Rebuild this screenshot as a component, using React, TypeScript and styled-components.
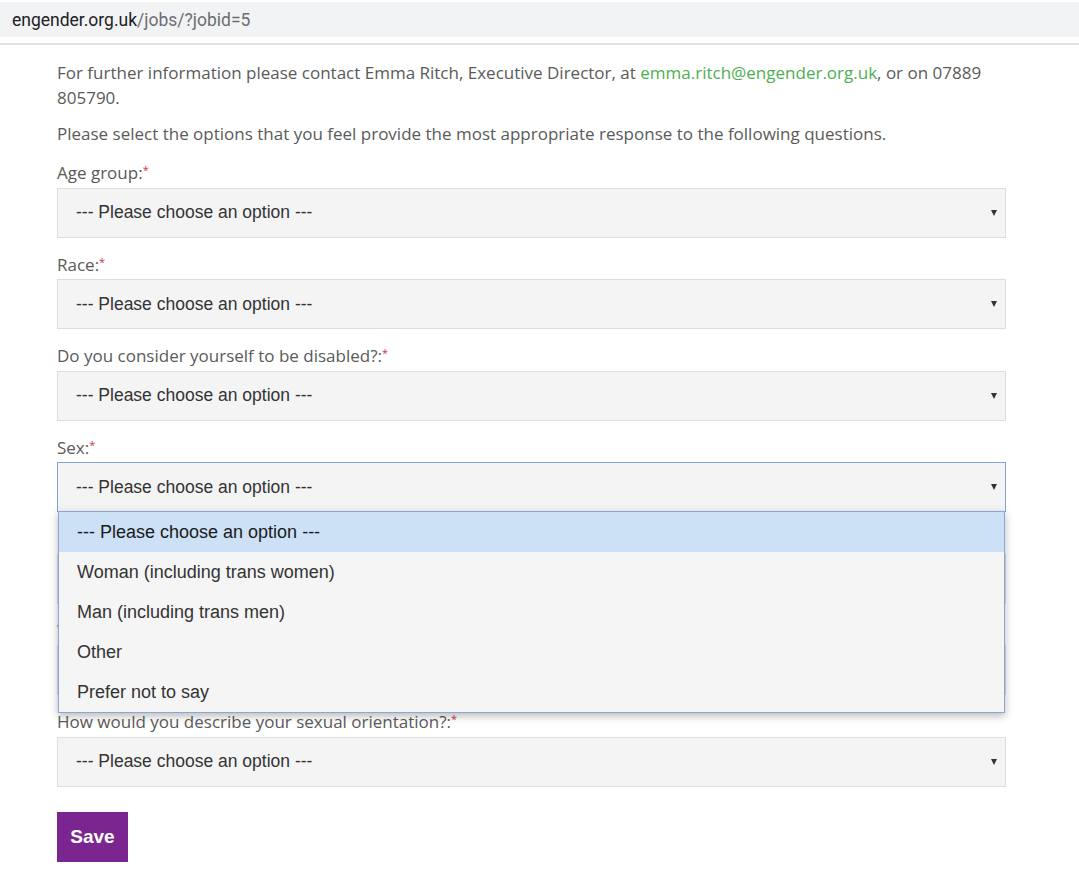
import React from 'react'
import styled, { createGlobalStyle } from 'styled-components'

const GlobalStyle = createGlobalStyle`
  body {
    margin: 0;
    background: #fff;
    font-family: 'Open Sans', 'Liberation Sans', sans-serif;
  }
`

type Field = {
  label: string
  open?: boolean
}

const fields: Field[] = [
  { label: 'Age group:' },
  { label: 'Race:' },
  { label: 'Do you consider yourself to be disabled?:' },
  { label: 'Sex:', open: true },
  { label: 'Is your gender identity the same as the sex you were assigned at birth?:' },
  { label: 'What is your religion or belief?:' },
  { label: 'How would you describe your sexual orientation?:' },
]

const sexOptions = [
  '--- Please choose an option ---',
  'Woman (including trans women)',
  'Man (including trans men)',
  'Other',
  'Prefer not to say',
]

const PLACEHOLDER = '--- Please choose an option ---'

const App = () => {
  return (
    <>
      <GlobalStyle />
      <AddressBar>
        <Host>engender.org.uk</Host>
        <Path>/jobs/?jobid=5</Path>
      </AddressBar>
      <Divider />

      <Content>
        <Text>
          For further information please contact Emma Ritch, Executive Director, at{' '}
          <Link href="#">emma.ritch@engender.org.uk</Link>, or on 07889 805790.
        </Text>
        <Text>
          Please select the options that you feel provide the most appropriate response to the
          following questions.
        </Text>

        <Form>
          {fields.map((field) => (
            <FieldGroup key={field.label}>
              <Label>
                {field.label}
                <Required>*</Required>
              </Label>
              <SelectWrap>
                <SelectBox $focused={field.open}>
                  {PLACEHOLDER}
                  <Caret />
                </SelectBox>
                {field.open && (
                  <Dropdown>
                    {sexOptions.map((option, i) => (
                      <Option key={option} $active={i === 0}>
                        {option}
                      </Option>
                    ))}
                  </Dropdown>
                )}
              </SelectWrap>
            </FieldGroup>
          ))}
          <SaveButton type="button">Save</SaveButton>
        </Form>
      </Content>
    </>
  )
}

export default App

const AddressBar = styled.div`
  margin-top: 2px;
  height: 35px;
  display: flex;
  align-items: center;
  padding-left: 12px;
  background: #f1f3f4;
  font-family: Roboto, 'Liberation Sans', sans-serif;
  font-size: 17.5px;
`

const Host = styled.span`
  color: #202124;
`

const Path = styled.span`
  color: #6b6e72;
`

const Divider = styled.div`
  margin-top: 6px;
  height: 2px;
  background: #e1e3e3;
`

const Content = styled.main`
  width: 949px;
  padding: 15px 0 40px 57px;
`

const Text = styled.p`
  margin: 0 0 11px;
  font-size: 17px;
  line-height: 25px;
  color: #5a5a5a;
`

const Link = styled.a`
  color: #4cb050;
  text-decoration: none;
`

const Form = styled.form`
  display: flex;
  flex-direction: column;
  padding-top: 3px;
`

const FieldGroup = styled.div`
  display: flex;
  flex-direction: column;
  margin-bottom: 14px;
`

const Label = styled.label`
  font-size: 17px;
  line-height: 25px;
  color: #5a5a5a;
  margin-bottom: 2.5px;
`

const Required = styled.sup`
  color: #d0343b;
  font-size: 11px;
  line-height: 0;
  vertical-align: 5px;
`

const SelectWrap = styled.div`
  position: relative;
`

const SelectBox = styled.div<{ $focused?: boolean }>`
  box-sizing: border-box;
  height: 50px;
  display: flex;
  align-items: center;
  justify-content: space-between;
  padding: 0 8px 0 18px;
  background: #f4f4f4;
  border: 1px solid ${({ $focused }) => ($focused ? '#7fa3dc' : '#dedede')};
  font-family: 'Liberation Sans', Arial, sans-serif;
  font-size: 17.5px;
  color: #333;
`

const Caret = styled.span`
  width: 0;
  height: 0;
  border-left: 3.5px solid transparent;
  border-right: 3.5px solid transparent;
  border-top: 6px solid #333;
`

const Dropdown = styled.ul`
  position: absolute;
  top: 100%;
  left: 1px;
  right: 1px;
  margin: -1px 0 0;
  padding: 0;
  list-style: none;
  background: #f5f5f5;
  border: 1px solid #8aa6d6;
  box-shadow: 0 3px 8px rgba(0, 0, 0, 0.28);
  z-index: 10;
`

const Option = styled.li<{ $active?: boolean }>`
  height: 40px;
  display: flex;
  align-items: center;
  padding-left: 18px;
  background: ${({ $active }) => ($active ? '#cce1f6' : 'transparent')};
  font-family: 'Liberation Sans', Arial, sans-serif;
  font-size: 18px;
  color: ${({ $active }) => ($active ? '#1a1a1a' : '#333')};
`

const SaveButton = styled.button`
  align-self: flex-start;
  width: 71px;
  height: 50px;
  margin-top: 11px;
  border: none;
  background: #7b2690;
  color: #fff;
  font-family: 'Liberation Sans', Arial, sans-serif;
  font-weight: bold;
  font-size: 19px;
  cursor: pointer;
`
